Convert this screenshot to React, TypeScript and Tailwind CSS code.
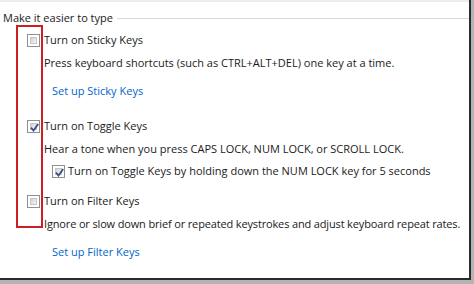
import React from 'react'

function Box({ checked = false }: { checked?: boolean }) {
  return (
    <span className="flex h-[13px] w-[13px] shrink-0 items-center justify-center border border-[#8e8f8f] bg-white p-[2px]">
      <span className="relative flex h-full w-full items-center justify-center border border-[#c6c6c6] bg-gradient-to-br from-[#d2d2d2] to-[#f7f7f7]">
        {checked && (
          <svg viewBox="0 0 11 11" className="absolute left-[-2px] top-[-2px] h-[11px] w-[11px]">
            <path d="M2 5.6 L4.5 8.6 L9.2 2" fill="none" stroke="#3a4f8c" strokeWidth="1.8" />
          </svg>
        )}
      </span>
    </span>
  )
}

function Row({ mt, pl, children }: { mt: string; pl: string; children: React.ReactNode }) {
  return <div className={`flex h-[20px] items-center whitespace-nowrap ${mt} ${pl}`}>{children}</div>
}

export default function App() {
  return (
    <div
      className="relative h-[284px] w-[474px] overflow-hidden bg-[#b4b4b4] text-[11px] text-[#1a1a1a]"
      style={{ fontFamily: '"Open Sans", "Noto Sans", sans-serif' }}
    >
      <div className="h-[280px] w-[471px] border-b-2 border-r-2 border-[#2b2b2b] bg-white">
        <div className="h-[2px] bg-[#ececec]" />

        <div className="mt-[6px] flex h-[20px] items-center pl-[3px]">
          <span className="whitespace-nowrap">Make it easier to type</span>
          <span className="ml-[4px] h-px flex-1 bg-[#d8d8d8]" />
        </div>

        <Row mt="mt-[2px]" pl="pl-[27px]">
          <Box />
          <span className="ml-[4px]">Turn on Sticky Keys</span>
        </Row>
        <Row mt="mt-[3px]" pl="pl-[44px]">
          <span>Press keyboard shortcuts (such as CTRL+ALT+DEL) one key at a time.</span>
        </Row>
        <Row mt="mt-[8px]" pl="pl-[52px]">
          <a className="text-[#0066cc]">Set up Sticky Keys</a>
        </Row>

        <Row mt="mt-[15px]" pl="pl-[27px]">
          <Box checked />
          <span className="ml-[4px]">Turn on Toggle Keys</span>
        </Row>
        <Row mt="mt-[3px]" pl="pl-[44px]">
          <span>Hear a tone when you press CAPS LOCK, NUM LOCK, or SCROLL LOCK.</span>
        </Row>
        <Row mt="mt-[2px]" pl="pl-[52px]">
          <Box checked />
          <span className="ml-[3px]">Turn on Toggle Keys by holding down the NUM LOCK key for 5 seconds</span>
        </Row>

        <Row mt="mt-[10px]" pl="pl-[27px]">
          <Box />
          <span className="ml-[4px]">Turn on Filter Keys</span>
        </Row>
        <Row mt="mt-[3px]" pl="pl-[44px]">
          <span className="tracking-[-0.15px]">Ignore or slow down brief or repeated keystrokes and adjust keyboard repeat rates.</span>
        </Row>
        <Row mt="mt-[8px]" pl="pl-[52px]">
          <a className="text-[#0066cc]">Set up Filter Keys</a>
        </Row>
      </div>

      {/* red highlight drawn over the checkboxes */}
      <div className="absolute left-[16px] top-[25px] h-[203px] w-[27px] border-2 border-[#cc1f24]" />
    </div>
  )
}
